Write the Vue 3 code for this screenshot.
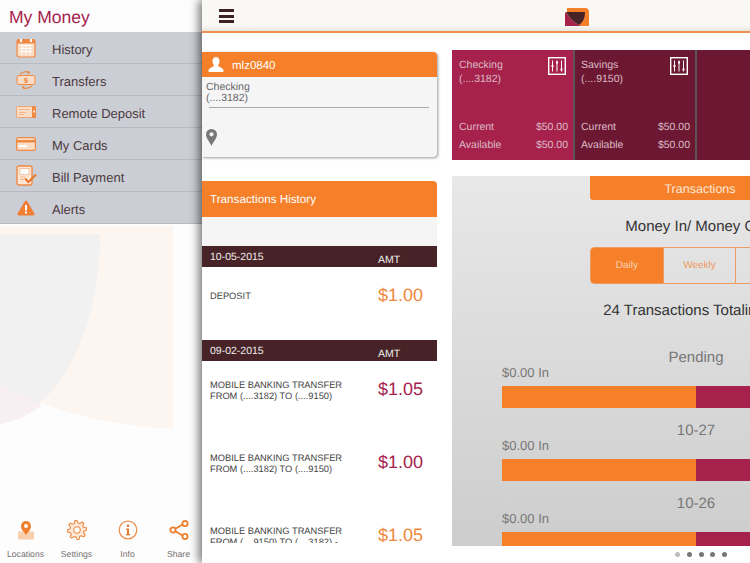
<template>
  <div class="app">
    <aside class="side">
      <svg class="side-bg" width="202" height="220" viewBox="0 0 202 220">
        <path d="M0 1H173V204C110 200 55 188 0 160Z" fill="#fdf5ef" />
        <path d="M0 9H100C100 105 60 185 0 199Z" fill="#f1f1f2" />
        <path d="M0 160C15 167 30 174 42 180C30 190 15 196 0 199Z" fill="#f7eff1" />
      </svg>

      <h1 class="brand">My Money</h1>

      <nav class="menu">
        <div class="menu-row" v-for="m in menu" :key="m.label">
          <span class="menu-icon">
            <svg v-if="m.icon === 'history'" width="20" height="20" viewBox="0 0 20 20">
              <rect x="1" y="1.500" width="18" height="17.500" rx="2" fill="#fbdcc4" stroke="#ef8a45" stroke-width="1.200" />
              <rect x="1" y="1.500" width="18" height="4" fill="#ef8a45" />
              <path d="M4 7.500h12M4 10.500h12M4 13.500h12M6 6.500v10M10 6.500v10M14 6.500v10" stroke="#fff" stroke-width="1" />
              <rect x="4" y="1" width="2" height="3" fill="#fff" />
              <rect x="14" y="1" width="2" height="3" fill="#fff" />
            </svg>
            <svg v-else-if="m.icon === 'transfers'" width="20" height="20" viewBox="0 0 20 20">
              <rect x="1" y="5.500" width="18" height="9" rx="2" fill="#fbdcc4" stroke="#ef8a45" />
              <text x="10" y="12.500" text-anchor="middle" class="mini-dollar">$</text>
              <path d="M4 4.500C6 1.500 11 1 13.500 2.500M16 15.500C14 18.500 9 19 6.500 17.500" fill="none" stroke="#ef8a45" stroke-width="1.200" />
              <path d="M11.500 .8 14.500 2.800 11.800 4.500ZM8.500 19.200 5.500 17.200 8.200 15.500Z" fill="#ef8a45" />
            </svg>
            <svg v-else-if="m.icon === 'deposit'" width="20" height="12" viewBox="0 0 20 12">
              <rect x=".5" y=".5" width="19" height="11" rx="1" fill="#fbdcc4" stroke="#f0a672" />
              <rect x="16" y="0" width="4" height="12" fill="#ef8a45" />
              <rect x="17.500" y="4.500" width="1.500" height="2" fill="#fff" />
              <path d="M3 3.500h11M3 6.500h7M3 8.500h5" stroke="#f3b68a" stroke-width="1" />
            </svg>
            <svg v-else-if="m.icon === 'cards'" width="20" height="14" viewBox="0 0 20 14">
              <rect x=".6" y=".6" width="18.800" height="12.800" rx="1.500" fill="#fbdcc4" stroke="#ef8a45" stroke-width="1.200" />
              <rect x="1" y="3" width="18" height="2.500" fill="#ef8a45" />
              <rect x="3" y="8" width="8" height="2" fill="#fff" />
            </svg>
            <svg v-else-if="m.icon === 'bill'" width="21" height="21" viewBox="0 0 21 21">
              <rect x="1" y="1" width="15" height="19" rx="2" fill="#fde6d5" stroke="#ef8a45" stroke-width="1.400" />
              <rect x="4" y="3.500" width="9" height="6" fill="#fff" stroke="#f3b68a" stroke-width=".8" />
              <path d="M4 12h5M4 14.500h4" stroke="#f3b68a" stroke-width="1" />
              <path d="M9 13.500 12.500 17 20 9.500" fill="none" stroke="#e8762a" stroke-width="2" />
            </svg>
            <svg v-else width="18" height="16" viewBox="0 0 18 16">
              <path d="M9 .8C9.700 .8 10.200 1.200 10.500 1.800L17.300 13.300C17.900 14.400 17.300 15.400 16 15.400H2C.7 15.400 .1 14.400 .7 13.300L7.500 1.800C7.800 1.200 8.300 .8 9 .8Z" fill="#ee7f37" />
              <rect x="8" y="5" width="2" height="5.500" fill="#fff" />
              <rect x="8" y="11.500" width="2" height="2" fill="#fff" />
            </svg>
          </span>
          <span class="menu-label">{{ m.label }}</span>
        </div>
      </nav>

      <footer class="side-foot">
        <div class="foot-item">
          <svg width="22" height="20" viewBox="0 0 22 20">
            <path d="M3 11.500H19V18C19 19 18.500 19.500 17.500 19.500H4.500C3.500 19.500 3 19 3 18Z" fill="#f9cfae" />
            <path d="M11 15C8.500 11.500 6 9.500 6 6A5 5 0 0 1 16 6C16 9.500 13.500 11.500 11 15Z" fill="#ee7f2d" />
            <circle cx="11" cy="6" r="2" fill="#fff" />
          </svg>
          <span>Locations</span>
        </div>
        <div class="foot-item">
          <svg width="20" height="20" viewBox="0 0 20 20">
            <path :d="gearPath" fill="#fde9da" stroke="#ef8a45" stroke-width="1.100" stroke-linejoin="round" />
            <circle cx="10" cy="10" r="3.200" fill="#fff" stroke="#ef8a45" stroke-width="1.100" />
          </svg>
          <span>Settings</span>
        </div>
        <div class="foot-item">
          <svg width="20" height="20" viewBox="0 0 20 20">
            <circle cx="10" cy="10" r="8.800" fill="none" stroke="#ef8a45" stroke-width="1.200" />
            <circle cx="10" cy="5.800" r="1.300" fill="#e9792e" />
            <path d="M8 8.600h3V14h1.200v1.200H7.800V14H9V9.800H8Z" fill="#e9792e" />
          </svg>
          <span>Info</span>
        </div>
        <div class="foot-item">
          <svg width="20" height="20" viewBox="0 0 20 20">
            <path d="M4 10 15.500 3.500M4 10 15.500 16.500" stroke="#ee7f2d" stroke-width="2" />
            <circle cx="4" cy="10" r="2.600" fill="#fff" stroke="#ee7f2d" stroke-width="1.800" />
            <circle cx="16" cy="3.500" r="2.600" fill="#fff" stroke="#ee7f2d" stroke-width="1.800" />
            <circle cx="16" cy="16.500" r="2.600" fill="#fff" stroke="#ee7f2d" stroke-width="1.800" />
          </svg>
          <span>Share</span>
        </div>
      </footer>
    </aside>

    <main class="main">
      <header class="topbar">
        <span class="burger"><i></i><i></i><i></i></span>
        <svg class="logo" width="24" height="18" viewBox="0 0 24 18">
          <path d="M2 0H20Q24 0 24 4V18H15L2 4Z" fill="#f58029" />
          <path d="M0 5 1 4C4 9 8 14 14 17L15 18H0Z" fill="#a6224c" />
          <path d="M1 4H20C20 11 17 15 14 17C8 14 4 9 1 4Z" fill="#472226" />
        </svg>
      </header>

      <div class="content">
        <section class="left-col">
          <div class="user-card">
            <div class="user-head">
              <svg width="16" height="15" viewBox="0 0 16 15">
                <path d="M8 0C10.300 0 11.500 1.800 11.500 4C11.500 6 10.500 7.500 10 8.500C10.500 10 15 10.500 15.500 13.500V15H.5V13.500C1 10.500 5.500 10 6 8.500C5.500 7.500 4.500 6 4.500 4C4.500 1.800 5.700 0 8 0Z" fill="#fff" />
              </svg>
              <span class="user-name">mlz0840</span>
            </div>
            <div class="user-body">
              <div class="acct-name">Checking<br />(....3182)</div>
              <div class="rule"></div>
              <svg class="pin" width="11" height="17" viewBox="0 0 11 17">
                <path d="M5.500 0A5.500 5.500 0 0 1 11 5.500C11 9 7.500 12.500 5.500 17C3.500 12.500 0 9 0 5.500A5.500 5.500 0 0 1 5.500 0Z" fill="#77777a" />
                <circle cx="5.500" cy="5.300" r="2.100" fill="#f5f5f5" />
              </svg>
            </div>
          </div>

          <div class="hist-head">Transactions History</div>
          <div class="hist-gap"></div>
          <div class="hist-list">
            <template v-for="g in history" :key="g.date">
              <div class="date-bar">
                <span>{{ g.date }}</span>
                <span class="amt-label">AMT</span>
              </div>
              <div class="tx-row" v-for="(t, i) in g.rows" :key="i">
                <div class="tx-text">{{ t.text }}</div>
                <div class="tx-amt" :class="t.kind">{{ t.amount }}</div>
              </div>
            </template>
          </div>
        </section>

        <section class="right-col">
          <div class="accounts">
            <div class="account" v-for="a in accounts" :key="a.num" :class="a.kind">
              <div class="account-top">
                <div class="acct-title">{{ a.name }}<br />{{ a.num }}</div>
                <svg width="18" height="18" viewBox="0 0 18 18">
                  <rect x=".7" y=".7" width="16.600" height="16.600" fill="none" stroke="#fff" stroke-width="1.400" />
                  <path d="M4.500 3.500v11M9 3.500v11M13.500 3.500v11" stroke="#fff" stroke-width="1" />
                  <rect x="3.500" y="8" width="2" height="2" fill="#fff" />
                  <rect x="8" y="4.500" width="2" height="2" fill="#fff" />
                  <rect x="12.500" y="11.500" width="2" height="2" fill="#fff" />
                </svg>
              </div>
              <div class="bal"><span>Current</span><span>$50.00</span></div>
              <div class="bal"><span>Available</span><span>$50.00</span></div>
            </div>
            <div class="account filler"></div>
          </div>

          <div class="panel">
            <div class="panel-tab">Transactions</div>
            <div class="panel-title">Money In/ Money Out</div>
            <div class="segments">
              <div class="seg on">Daily</div>
              <div class="seg">Weekly</div>
              <div class="seg">Monthly</div>
            </div>
            <div class="panel-total">24 Transactions Totaling</div>
            <div class="flow" v-for="f in flows" :key="f">
              <div class="flow-date">{{ f }}</div>
              <div class="flow-in">$0.00 In</div>
              <div class="flow-bar"><span class="bar-in"></span><span class="bar-out"></span></div>
            </div>
          </div>

          <div class="dots">
            <i class="first"></i><i></i><i></i><i></i><i></i>
          </div>
        </section>
      </div>
    </main>
  </div>
</template>

<script setup>
const menu = [
  { label: 'History', icon: 'history' },
  { label: 'Transfers', icon: 'transfers' },
  { label: 'Remote Deposit', icon: 'deposit' },
  { label: 'My Cards', icon: 'cards' },
  { label: 'Bill Payment', icon: 'bill' },
  { label: 'Alerts', icon: 'alerts' }
]

const history = [
  {
    date: '10-05-2015',
    rows: [{ text: 'DEPOSIT', amount: '$1.00', kind: 'credit' }]
  },
  {
    date: '09-02-2015',
    rows: [
      { text: 'MOBILE BANKING TRANSFER FROM (....3182) TO (....9150)', amount: '$1.05', kind: 'debit' },
      { text: 'MOBILE BANKING TRANSFER FROM (....3182) TO (....9150)', amount: '$1.00', kind: 'debit' },
      { text: 'MOBILE BANKING TRANSFER FROM (....9150) TO (....3182) -', amount: '$1.05', kind: 'credit' }
    ]
  }
]

const accounts = [
  { name: 'Checking', num: '(....3182)', kind: 'crimson' },
  { name: 'Savings', num: '(....9150)', kind: 'wine' }
]

const flows = ['Pending', '10-27', '10-26']

// 8 toothed gear, centred in a 20x20 box
const gearPath = (() => {
  const pts = []
  for (let i = 0; i < 8; i++) {
    const a = (i * Math.PI) / 4 - Math.PI / 8
    const step = Math.PI / 4
    const at = [
      [a, 7],
      [a + step * 0.22, 9.6],
      [a + step * 0.5, 9.6],
      [a + step * 0.72, 7]
    ]
    at.forEach(([t, r]) => {
      pts.push(`${(10 + r * Math.cos(t)).toFixed(2)} ${(10 + r * Math.sin(t)).toFixed(2)}`)
    })
  }
  return 'M' + pts.join('L') + 'Z'
})()
</script>

<style scoped>
.app {
  display: flex;
  width: 750px;
  height: 563px;
  overflow: hidden;
  background: #fff;
  font-family: "Liberation Sans", Arial, sans-serif;
  text-rendering: geometricPrecision;
}

/* side menu */
.side {
  position: relative;
  flex: 0 0 202px;
  min-width: 0;
  display: flex;
  flex-direction: column;
  background: #fdfdfd;
}
.side-bg {
  position: absolute;
  left: 0;
  top: 225px;
}
.brand {
  position: relative;
  margin: 0;
  height: 32px;
  padding-left: 9px;
  font-size: 17.500px;
  font-weight: normal;
  line-height: 34px;
  color: #a6224c;
}
.menu {
  position: relative;
}
.menu-row {
  display: flex;
  align-items: center;
  height: 31px;
  border-bottom: 1px solid #b6b9bf;
  background: #cbced4;
  font-size: 13px;
  color: #4b3a3f;
}
.menu-icon {
  flex: 0 0 52px;
  display: flex;
  justify-content: center;
}
.menu-label {
  padding-top: 3px;
}
.mini-dollar {
  font-size: 7px;
  font-weight: bold;
  fill: #e9792e;
}
.side-foot {
  position: relative;
  margin-top: auto;
  display: grid;
  grid-template-columns: repeat(4, 51px);
  height: 39px;
  padding-bottom: 4px;
}
.foot-item {
  display: flex;
  flex-direction: column;
  align-items: center;
  justify-content: space-between;
  font-size: 8.700px;
  color: #777073;
}

/* main pane */
.main {
  position: relative;
  flex: 1;
  min-width: 0;
  display: flex;
  flex-direction: column;
  background: #fff;
  box-shadow: -3px 0 9px rgba(0, 0, 0, 0.55);
}
.topbar {
  display: flex;
  align-items: center;
  flex: none;
  height: 33px;
  padding-left: 17px;
  box-sizing: border-box;
  background: linear-gradient(#faf8f4 82%, #e8e5e0);
  border-bottom: 2px solid #ef9150;
}
.burger {
  display: flex;
  flex-direction: column;
  gap: 2.500px;
  margin-top: 1px;
}
.burger i {
  display: block;
  width: 15px;
  height: 3px;
  background: #3c2024;
}
.logo {
  margin-left: 331px;
  margin-top: 3px;
}
.content {
  display: flex;
  gap: 15px;
  min-height: 0;
  flex: 1;
}
.left-col {
  flex: 0 0 235px;
  padding-top: 19px;
}
.user-card {
  height: 105px;
  border-radius: 0 4px 4px 0;
  background: #f5f5f5;
  box-shadow: 1px 1px 3px rgba(0, 0, 0, 0.4);
}
.user-head {
  display: flex;
  align-items: center;
  gap: 8px;
  height: 25px;
  padding-left: 6px;
  border-radius: 0 4px 0 0;
  background: #f58029;
  font-size: 11.500px;
  color: #fff;
}
.user-name {
  padding-top: 2px;
}
.user-body {
  padding: 5px 8px 0 4px;
}
.acct-name {
  font-size: 10.500px;
  line-height: 11px;
  color: #666;
}
.rule {
  height: 1px;
  margin: 3px 0 0 3px;
  background: #a9a9a9;
}
.pin {
  display: block;
  margin-top: 21px;
}
.hist-head {
  height: 36px;
  margin-top: 24px;
  padding-left: 8px;
  border-radius: 0 4px 0 0;
  background: #f58029;
  font-size: 11.700px;
  line-height: 37px;
  color: #fff;
}
.hist-gap {
  height: 29px;
  background: #f5f5f5;
}
.hist-list {
  height: 297px;
  overflow: hidden;
}
.date-bar {
  display: flex;
  height: 21px;
  padding-left: 8px;
  background: #472226;
  font-size: 10.500px;
  line-height: 22px;
  color: #eee;
}
.date-bar span:first-child {
  flex: 0 0 168px;
}
.amt-label {
  padding-top: 3px;
}
.tx-row {
  display: flex;
  align-items: center;
  height: 73px;
  padding: 0 8px 14px;
  box-sizing: border-box;
}
.tx-text {
  flex: 0 0 168px;
  padding-right: 30px;
  box-sizing: border-box;
  font-size: 9.300px;
  line-height: 11px;
  color: #444;
}
.tx-amt {
  padding-bottom: 2px;
  font-size: 18px;
}
.tx-amt.credit {
  color: #f0883c;
}
.tx-amt.debit {
  color: #a6224c;
}

/* right pane */
.right-col {
  flex: 0 0 496px;
  padding-top: 17px;
}
.accounts {
  display: flex;
  height: 110px;
}
.account {
  flex: 0 0 122px;
  box-sizing: border-box;
  padding: 7px 5px 0 6px;
  font-size: 10.500px;
  color: #dcbcc8;
  border-left: 2px solid #5c5458;
}
.account.crimson {
  flex-basis: 121px;
  padding-left: 7px;
  border-left: 0;
  background: #a6224c;
}
.account.wine,
.account.filler {
  background: #6d1832;
}
.account.filler {
  flex: 1;
}
.account-top {
  display: flex;
  justify-content: space-between;
  align-items: flex-start;
  height: 61px;
  padding-right: 2px;
}
.acct-title {
  padding-top: 1px;
  line-height: 14px;
}
.bal {
  display: flex;
  justify-content: space-between;
  height: 18px;
  line-height: 18px;
}
.panel {
  height: 370px;
  margin-top: 16px;
  overflow: hidden;
  background: linear-gradient(#e8e8e8, #cdcdcd);
  text-align: center;
}
.panel-tab {
  width: 220px;
  height: 24px;
  margin: 0 auto;
  border-radius: 0 0 3px 3px;
  background: #f58029;
  font-size: 12.500px;
  line-height: 27px;
  color: #fde6d4;
}
.panel-title {
  margin-top: 17px;
  padding-right: 6px;
  font-size: 15px;
  line-height: 20px;
  color: #333;
}
.segments {
  display: flex;
  width: 220px;
  height: 37px;
  box-sizing: border-box;
  margin: 10px auto 0;
  border: 1px solid #ef9a5e;
  border-radius: 4px;
}
.seg {
  flex: 1;
  border-right: 1px solid #ef9a5e;
  font-size: 10px;
  line-height: 35px;
  color: #ee9a60;
}
.seg.on {
  background: #f58029;
  color: #fbd3b4;
  border-radius: 3px 0 0 3px;
}
.panel-total {
  margin-top: 17px;
  padding-right: 32px;
  font-size: 15px;
  line-height: 20px;
  color: #333;
}
.flow {
  margin: 0 58px 0 50px;
  padding-bottom: 14px;
}
.panel-total + .flow {
  margin-top: 28px;
}
.flow-date {
  font-size: 15px;
  line-height: 17px;
  color: #777;
}
.flow-in {
  font-size: 13px;
  line-height: 14px;
  text-align: left;
  color: #777;
}
.flow-bar {
  display: flex;
  height: 22px;
  margin-top: 6px;
}
.bar-in {
  flex: 1;
  background: #f58029;
}
.bar-out {
  flex: 1;
  background: #a6224c;
}
.dots {
  display: flex;
  justify-content: center;
  gap: 6.600px;
  margin: 6px 0 0 2px;
}
.dots i {
  display: block;
  width: 5px;
  height: 5px;
  border-radius: 50%;
  background: #777;
}
.dots i.first {
  background: #bdbdbd;
}
</style>
